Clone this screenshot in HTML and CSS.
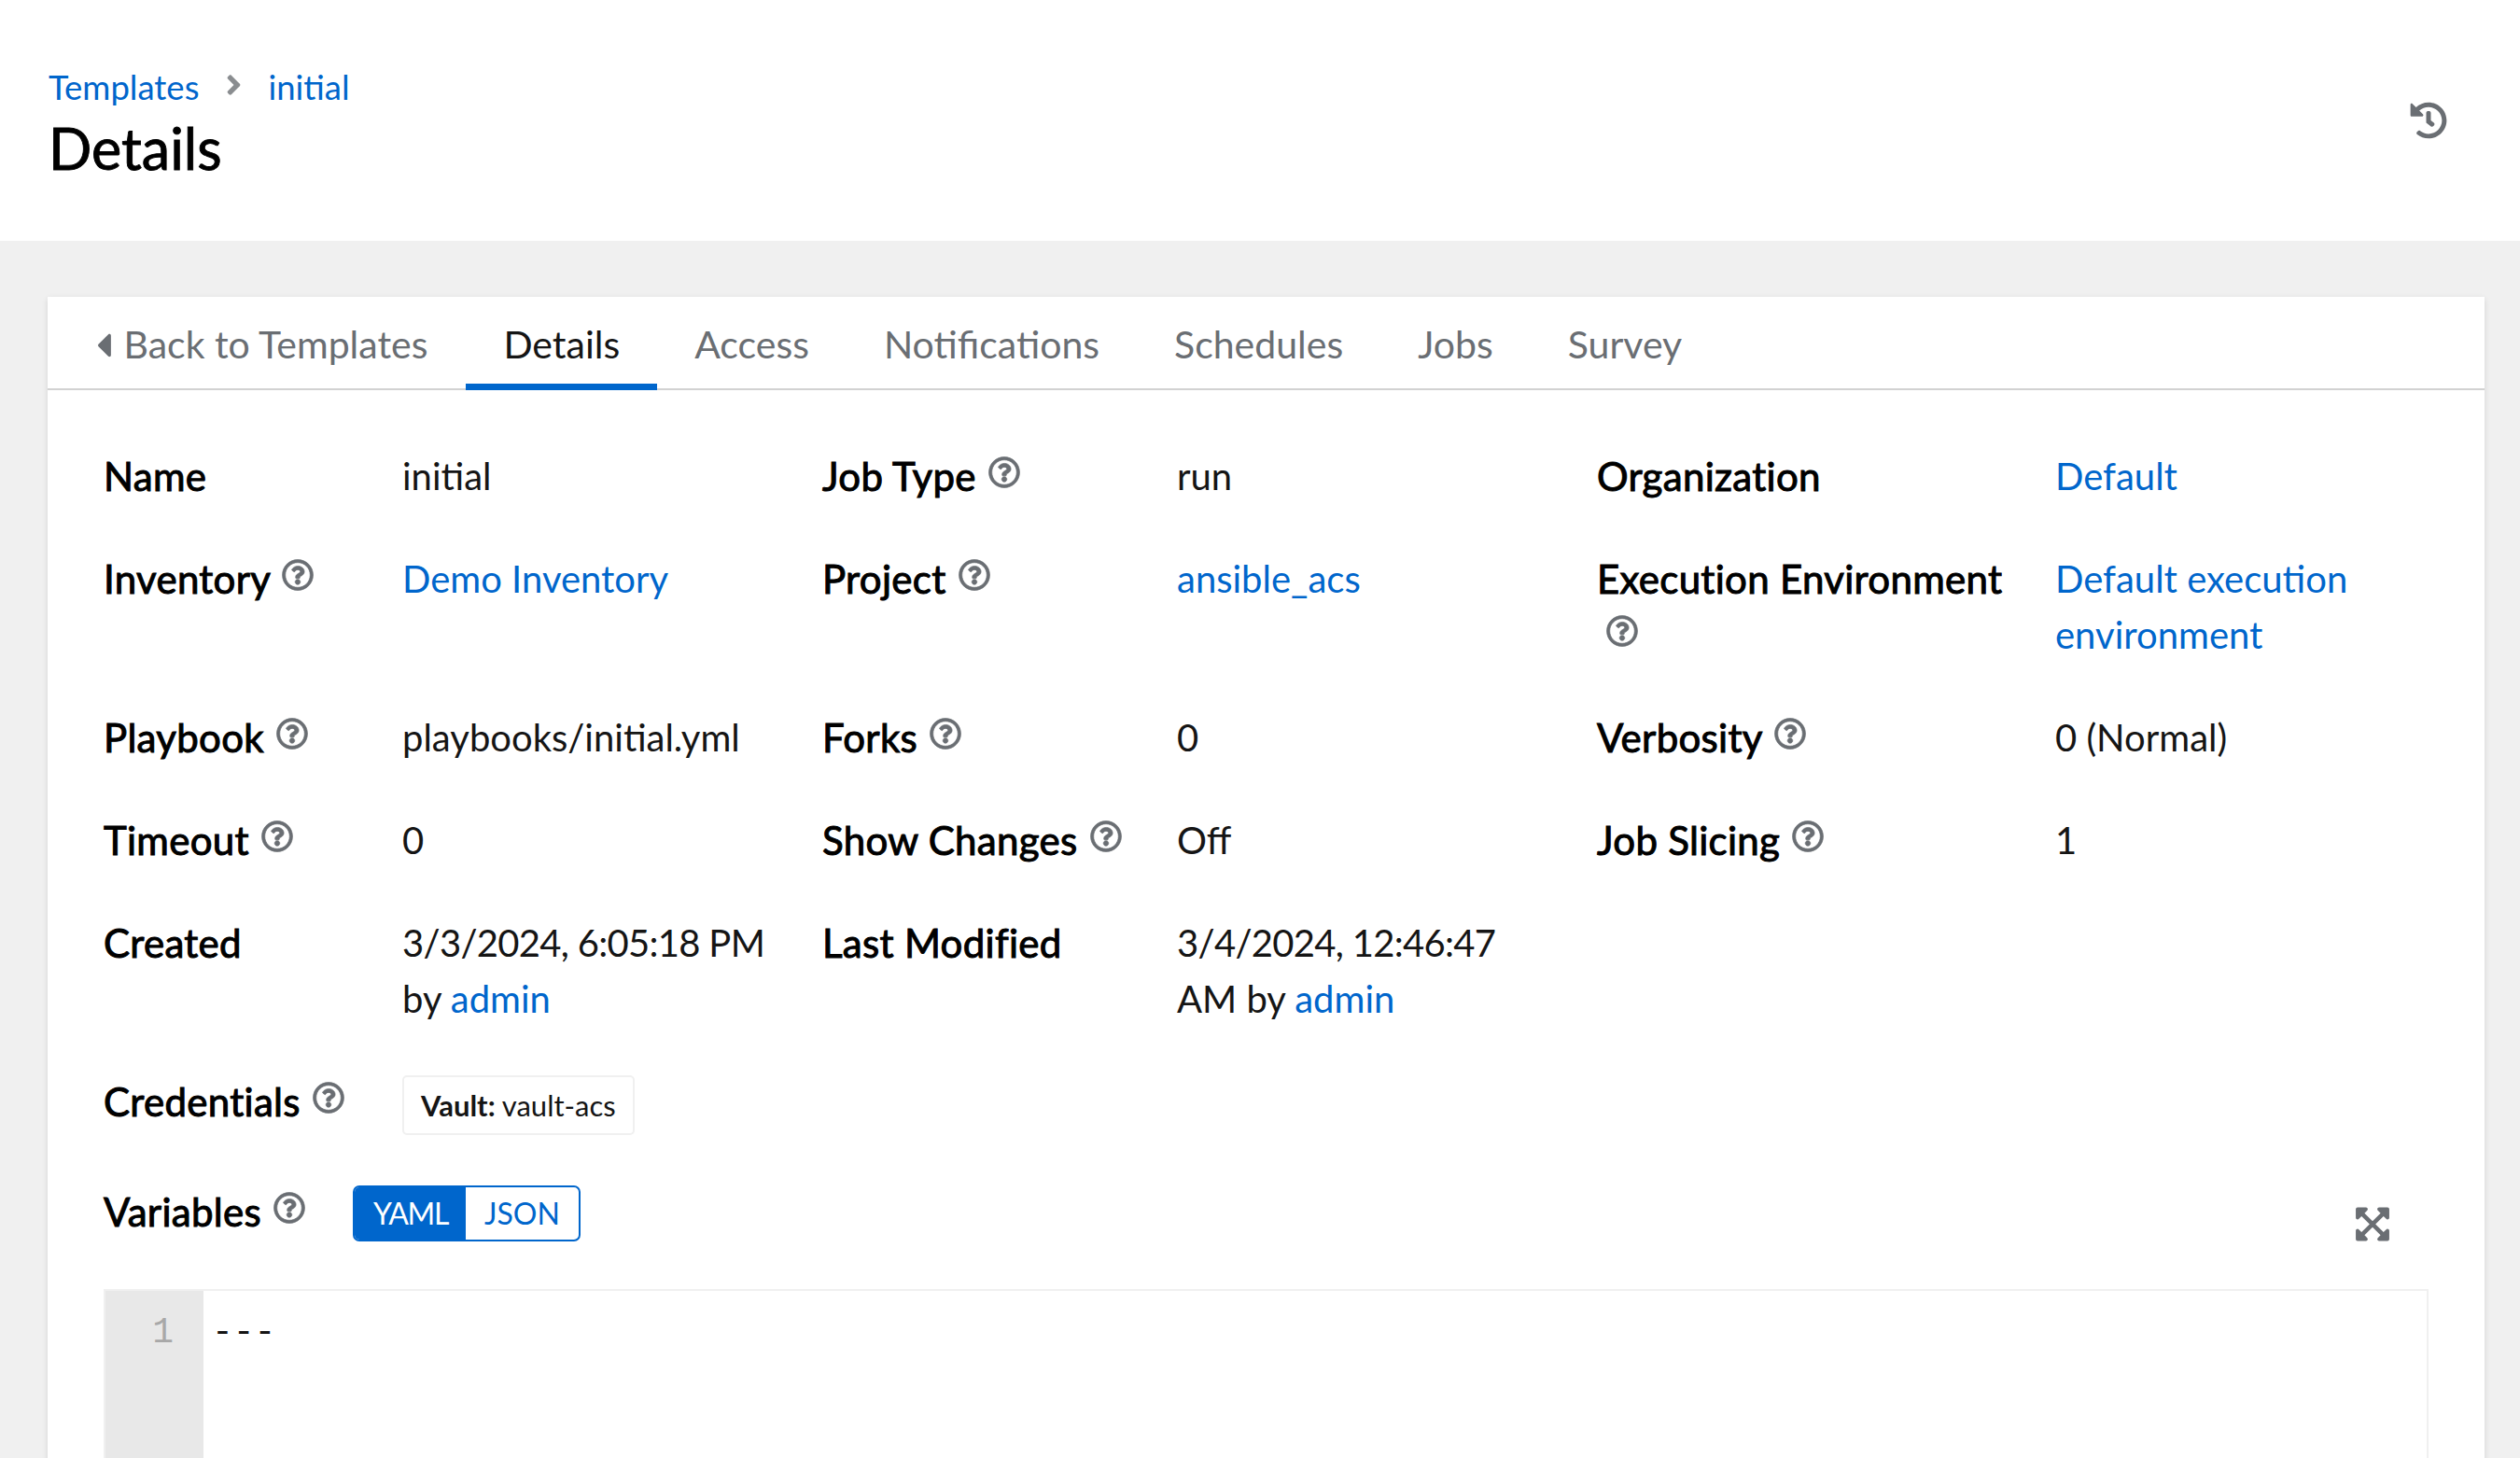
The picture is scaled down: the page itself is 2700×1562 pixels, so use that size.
FILE: index.html
```html
<!DOCTYPE html>
<html lang="en">
<head>
  <meta charset="UTF-8" />
  <title>Details | Templates</title>
  <link rel="stylesheet" href="styles.css">
</head>
<body>
  <svg class="defs" aria-hidden="true">
    <symbol id="help" viewBox="0 0 512 512"><path d="M256 8C119.043 8 8 119.083 8 256c0 136.997 111.043 248 248 248s248-111.003 248-248C504 119.083 392.957 8 256 8zm0 448c-110.532 0-200-89.431-200-200 0-110.495 89.472-200 200-200 110.491 0 200 89.471 200 200 0 110.53-89.431 200-200 200zm107.244-255.2c0 67.052-72.421 68.084-72.421 92.863V300c0 6.627-5.373 12-12 12h-45.647c-6.627 0-12-5.373-12-12v-8.659c0-35.745 27.1-50.034 47.579-61.516 17.561-9.845 28.324-16.541 28.324-29.579 0-17.246-21.999-28.693-39.784-28.693-23.189 0-33.894 10.977-48.942 29.969-4.057 5.12-11.46 6.071-16.666 2.124l-27.824-21.098c-5.107-3.872-6.251-11.066-2.644-16.363C184.846 131.491 214.94 112 261.794 112c49.071 0 101.45 38.304 101.45 88.8zM298 368c0 23.159-18.841 42-42 42s-42-18.841-42-42 18.841-42 42-42 42 18.841 42 42z"/></symbol>
  </svg>

  <header class="page-header">
    <div>
      <nav class="breadcrumb">
        <a href="#">Templates</a>
        <svg class="crumb-sep" viewBox="0 0 256 512"><path d="M224.3 273l-136 136c-9.4 9.4-24.6 9.4-33.9 0l-22.6-22.6c-9.4-9.4-9.4-24.6 0-33.9l96.4-96.4-96.4-96.4c-9.4-9.4-9.4-24.6 0-33.9L54.3 103c9.4-9.4 24.6-9.4 33.9 0l136 136c9.5 9.4 9.5 24.6.1 34z"/></svg>
        <a href="#">initial</a>
      </nav>
      <h1>Details</h1>
    </div>
    <svg class="history" viewBox="0 0 512 512"><path d="M504 255.531c.253 136.64-111.18 248.372-247.82 248.468-59.015.042-113.223-20.53-155.822-54.911-11.077-8.94-11.905-25.541-1.839-35.607l11.267-11.267c8.609-8.609 22.353-9.551 31.891-1.984C173.062 425.135 212.781 440 256 440c101.705 0 184-82.311 184-184 0-101.705-82.311-184-184-184-48.814 0-93.149 18.969-126.068 49.932l50.754 50.754c10.08 10.08 2.941 27.314-11.313 27.314H24c-8.837 0-16-7.163-16-16V38.627c0-14.254 17.234-21.393 27.314-11.314l49.372 49.372C129.209 34.136 189.552 8 256 8c136.81 0 247.747 110.78 248 247.531zm-180.912 78.784l9.823-12.63c8.138-10.463 6.253-25.542-4.21-33.679L288 256.349V152c0-13.255-10.745-24-24-24h-16c-13.255 0-24 10.745-24 24v135.651l65.409 50.874c10.463 8.137 25.541 6.253 33.679-4.21z"/></svg>
  </header>

  <main class="page-main">
    <section class="card">
      <ul class="tabs">
        <li class="tab tab-back">
          <svg class="back-caret" viewBox="0 0 192 512"><path d="M192 127.338v257.324c0 17.818-21.543 26.741-34.142 14.142L29.196 270.142c-7.81-7.81-7.81-20.474 0-28.284l128.662-128.662c12.599-12.6 34.142-3.676 34.142 14.142z"/></svg>
          Back to Templates
        </li>
        <li class="tab active">Details</li>
        <li class="tab">Access</li>
        <li class="tab">Notifications</li>
        <li class="tab">Schedules</li>
        <li class="tab">Jobs</li>
        <li class="tab">Survey</li>
      </ul>

      <div class="card-body">
        <dl class="details">
          <dt>Name</dt>
          <dd>initial</dd>
          <dt>Job Type <svg class="help"><use href="#help"/></svg></dt>
          <dd>run</dd>
          <dt>Organization</dt>
          <dd><a href="#">Default</a></dd>

          <dt>Inventory <svg class="help"><use href="#help"/></svg></dt>
          <dd><a href="#">Demo Inventory</a></dd>
          <dt>Project <svg class="help"><use href="#help"/></svg></dt>
          <dd><a href="#">ansible_acs</a></dd>
          <dt>Execution Environment<br><svg class="help help-wrapped"><use href="#help"/></svg></dt>
          <dd><a href="#">Default execution<br>environment</a></dd>

          <dt>Playbook <svg class="help"><use href="#help"/></svg></dt>
          <dd>playbooks/initial.yml</dd>
          <dt>Forks <svg class="help"><use href="#help"/></svg></dt>
          <dd>0</dd>
          <dt>Verbosity <svg class="help"><use href="#help"/></svg></dt>
          <dd>0 (Normal)</dd>

          <dt>Timeout <svg class="help"><use href="#help"/></svg></dt>
          <dd>0</dd>
          <dt>Show Changes <svg class="help"><use href="#help"/></svg></dt>
          <dd>Off</dd>
          <dt>Job Slicing <svg class="help"><use href="#help"/></svg></dt>
          <dd>1</dd>

          <dt>Created</dt>
          <dd><span class="date">3/3/2024, 6:05:18 PM</span><br>by <a href="#">admin</a></dd>
          <dt>Last Modified</dt>
          <dd><span class="date">3/4/2024, 12:46:47</span><br>AM by <a href="#">admin</a></dd>

          <dt class="new-row">Credentials <svg class="help"><use href="#help"/></svg></dt>
          <dd class="wide"><span class="tag"><b>Vault:</b> vault-acs</span></dd>
        </dl>

        <div class="vars-bar">
          <span class="vars-label">Variables <svg class="help"><use href="#help"/></svg></span>
          <div class="toggle">
            <span class="toggle-btn on">YAML</span>
            <span class="toggle-btn">JSON</span>
          </div>
          <svg class="expand" viewBox="0 0 448 512"><path d="M448 344v112a23.94 23.94 0 0 1-24 24H312c-21.39 0-32.09-25.9-17-41l36.2-36.2L224 295.6 116.77 402.9 153 439c15.09 15.1 4.39 41-17 41H24a23.94 23.94 0 0 1-24-24V344c0-21.4 25.89-32.1 41-17l36.19 36.2L184.46 256 77.18 148.7 41 185c-15.1 15.1-41 4.4-41-17V56a23.94 23.94 0 0 1 24-24h112c21.39 0 32.09 25.9 17 41l-36.2 36.2L224 216.4l107.23-107.3L295 73c-15.09-15.1-4.39-41 17-41h112a23.94 23.94 0 0 1 24 24v112c0 21.4-25.89 32.1-41 17l-36.19-36.2L263.54 256l107.28 107.3L407 327.1c15.1-15.2 41-4.5 41 16.9z"/></svg>
        </div>

        <div class="editor">
          <div class="gutter">1</div>
          <div class="code">---</div>
        </div>
      </div>
    </section>
  </main>
</body>
</html>
```

FILE: styles.css
```css
* {
  box-sizing: border-box;
  margin: 0;
  padding: 0;
}

html,
body {
  height: 1562px;
  overflow: hidden;
}

body {
  font-family: 'Lato', sans-serif;
  font-size: 40px;
  line-height: 60px;
  color: #151515;
  background: #f0f0f0;
}

a {
  color: #06c;
  text-decoration: none;
}

.defs {
  display: none;
}

.page-header {
  height: 258px;
  padding: 67px 52px 0;
  background: #fff;
  display: flex;
  justify-content: space-between;
}

.breadcrumb {
  display: flex;
  align-items: center;
  font-size: 36.5px;
  line-height: 52px;
}

.crumb-sep {
  width: 17px;
  height: 34px;
  margin: -4px 28px 0 29px;
  fill: #8a8d90;
}

h1 {
  font-size: 61px;
  font-weight: 400;
  line-height: 80px;
  color: #000;
  -webkit-text-stroke: 0.9px #000;
}

.history {
  width: 40px;
  height: 40px;
  margin: 42px 26px 0 0;
  fill: #6a6e73;
}

.page-main {
  padding: 60px 38px 0 51px;
}

.card {
  height: 1400px;
  background: #fff;
  box-shadow: 0 2px 6px rgba(3, 3, 3, 0.12);
}

.tabs {
  display: flex;
  list-style: none;
  height: 100px;
  border-bottom: 2px solid #d2d2d2;
  color: #6a6e73;
  font-size: 41px;
}

.tab {
  padding: 21px 40px 0;
  height: 100px;
}

.tab-back {
  padding-left: 52px;
  padding-right: 41px;
}

.back-caret {
  width: 16px;
  height: 42px;
  margin-right: 3px;
  fill: #6a6e73;
  vertical-align: -7px;
}

.tab.active {
  color: #151515;
  border-bottom: 7px solid #06c;
}

.card-body {
  padding: 62px 60px 0 60px;
}

.details {
  display: grid;
  grid-template-columns: 320px 450px 380px 450px 491px 1fr;
  row-gap: 50px;
}

dt,
.vars-label {
  font-size: 42px;
  letter-spacing: 0.3px;
  color: #000;
  -webkit-text-stroke: 1px #000;
}

.date {
  letter-spacing: -0.7px;
}

.help {
  width: 34px;
  height: 34px;
  margin-left: 2px;
  fill: #6a6e73;
  stroke: #6a6e73;
  stroke-width: 10px;
  vertical-align: 3px;
}

.help-wrapped {
  margin-left: 10px;
}

.new-row {
  grid-column: 1;
}

.wide {
  grid-column: 2 / -1;
  line-height: 0;
}

.tag {
  display: inline-block;
  height: 64px;
  margin-top: 2px;
  padding: 0 18px;
  border: 2px solid #f0f0f0;
  border-radius: 5px;
  font-size: 31px;
  line-height: 60px;
}

.tag b {
  font-weight: 700;
}

.vars-bar {
  display: flex;
  align-items: center;
  height: 60px;
  margin-top: 54px;
}

.vars-label {
  width: 267px;
  margin-top: -4px;
}

.toggle {
  display: flex;
  height: 60px;
  border: 2px solid #06c;
  border-radius: 7px;
  font-size: 32px;
  line-height: 56px;
  color: #06c;
  overflow: hidden;
}

.toggle-btn {
  padding: 0 20px;
}

.toggle-btn.on {
  padding-right: 19px;
  background: #06c;
  color: #fff;
  letter-spacing: -1.4px;
}

.expand {
  width: 36px;
  height: 41px;
  margin: 22px 42px 0 auto;
  fill: #6a6e73;
}

.editor {
  display: flex;
  height: 400px;
  margin-top: 51px;
  border: 2px solid #f0f0f0;
  font-family: 'Liberation Mono', monospace;
  font-size: 38px;
}

.gutter {
  width: 105px;
  padding: 15px 32px 0 0;
  background: #e8e8e8;
  color: #a8a8a8;
  text-align: right;
}

.code {
  padding: 15px 0 0 9px;
}
```
